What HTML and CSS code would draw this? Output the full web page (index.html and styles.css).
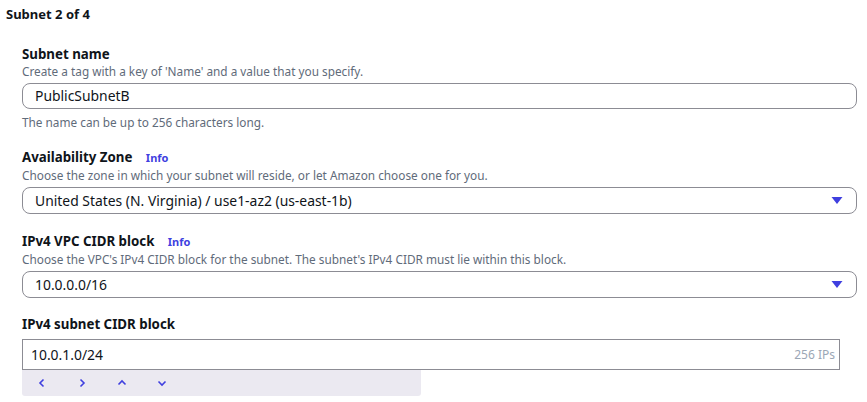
FILE: index.html
```html
<!DOCTYPE html>
<html>
<head>
<meta charset="utf-8">
<link rel="stylesheet" href="styles.css">
</head>
<body>
<div class="page">
  <h2 class="heading">Subnet 2 of 4</h2>
  <div class="fields">
    <div class="field">
      <div class="label">Subnet name</div>
      <div class="desc">Create a tag with a key of 'Name' and a value that you specify.</div>
      <div class="input rounded">PublicSubnetB</div>
      <div class="hint">The name can be up to 256 characters long.</div>
    </div>
    <div class="field">
      <div class="label">Availability Zone <span class="info">Info</span></div>
      <div class="desc">Choose the zone in which your subnet will reside, or let Amazon choose one for you.</div>
      <div class="input rounded select">
        <span>United States (N. Virginia) / use1-az2 (us-east-1b)</span>
        <svg class="caret" width="12" height="9" viewBox="0 0 12 9"><path d="M0.5 1 L11.5 1 L6 8 Z" fill="#3f3fdf"/></svg>
      </div>
    </div>
    <div class="field">
      <div class="label">IPv4 VPC CIDR block <span class="info">Info</span></div>
      <div class="desc">Choose the VPC's IPv4 CIDR block for the subnet. The subnet's IPv4 CIDR must lie within this block.</div>
      <div class="input rounded select">
        <span>10.0.0.0/16</span>
        <svg class="caret" width="12" height="9" viewBox="0 0 12 9"><path d="M0.5 1 L11.5 1 L6 8 Z" fill="#3f3fdf"/></svg>
      </div>
    </div>
    <div class="field last">
      <div class="label">IPv4 subnet CIDR block</div>
      <div class="cidr">
        <div class="input square"><span>10.0.1.0/24</span><span class="ips">256 IPs</span></div>
        <div class="stepper">
          <svg width="10" height="10" viewBox="0 0 10 10"><path d="M6.5 1.5 L3 5 L6.5 8.5" fill="none" stroke="#3f3fdf" stroke-width="1.6"/></svg>
          <svg width="10" height="10" viewBox="0 0 10 10"><path d="M3.5 1.5 L7 5 L3.5 8.5" fill="none" stroke="#3f3fdf" stroke-width="1.6"/></svg>
          <svg width="10" height="10" viewBox="0 0 10 10"><path d="M1.5 6.5 L5 3 L8.5 6.5" fill="none" stroke="#3f3fdf" stroke-width="1.6"/></svg>
          <svg width="10" height="10" viewBox="0 0 10 10"><path d="M1.5 3.5 L5 7 L8.5 3.5" fill="none" stroke="#3f3fdf" stroke-width="1.6"/></svg>
        </div>
      </div>
    </div>
  </div>
</div>
</body>
</html>
```
FILE: styles.css
```css
html, body {
  margin: 0;
  padding: 0;
  background: #ffffff;
}
body {
  font-family: "Noto Sans", "Open Sans", sans-serif;
  color: #0f141a;
}
.page {
  padding: 5px 10px 0 6px;
}
.heading {
  margin: 0;
  font-size: 13px;
  font-weight: 700;
  line-height: 18px;
}
.fields {
  padding: 22px 0 0 16px;
  display: flex;
  flex-direction: column;
  gap: 18px;
}
.label {
  font-size: 13.3px;
  font-weight: 700;
  line-height: 18px;
}
.info {
  color: #3f3fdf;
  font-size: 11px;
  font-weight: 700;
  margin-left: 10px;
}
.desc, .hint {
  font-size: 11.8px;
  color: #5f6b7a;
}
.desc {
  line-height: 17px;
  margin-bottom: 3px;
}
.hint {
  line-height: 16px;
  margin-top: 5px;
}
.input {
  box-sizing: border-box;
  height: 26px;
  border: 1px solid #8c8c94;
  font-size: 13.9px;
  line-height: 24px;
  padding: 0 12px;
  display: flex;
  align-items: center;
  justify-content: space-between;
}
.rounded {
  border-radius: 8px;
}
.select:last-child {
  height: 27px;
}
.caret {
  margin-right: 1px;
}
.field.last {
  margin-top: -1px;
}
.field.last .label {
  margin-bottom: 6px;
}
.cidr {
  width: 818px;
}
.input.square {
  height: 31px;
  border-radius: 0;
  padding: 0 4px 0 8px;
}
.ips {
  font-size: 12px;
  color: #9ba7b6;
}
.stepper {
  width: 399px;
  height: 26px;
  background: #ebe9f1;
  border-bottom-right-radius: 3px;
  border-bottom-left-radius: 3px;
  display: flex;
  align-items: center;
  gap: 30px;
  padding-left: 15px;
  box-sizing: border-box;
}
```
